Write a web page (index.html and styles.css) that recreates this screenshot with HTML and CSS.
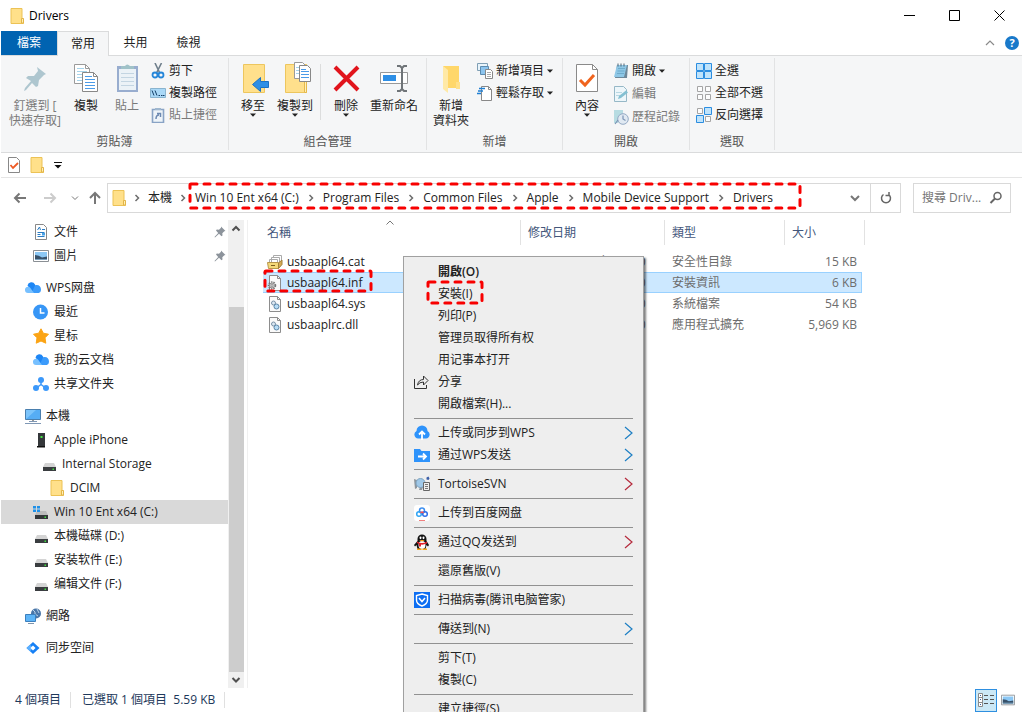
FILE: index.html
```html
<!DOCTYPE html>
<html lang="zh-Hant">

<head>
    <meta charset="UTF-8">
    <meta name="viewport" content="width=device-width, initial-scale=1.0">
    <title>Drivers</title>
    <link rel="stylesheet" href="styles.css">
</head>

<body>
    <!-- shared icons -->
    <svg class="sprite" aria-hidden="true">
        <symbol id="folder" viewBox="0 0 16 16">
            <path d="M2 .5h11v10.500h1.500v4.500H2z" fill="#ffe08a" stroke="#ecc255" />
            <path d="M12.500 15v-4.500h2V15z" fill="#fff0b5" stroke="#e3b548" />
        </symbol>
        <symbol id="chevron" viewBox="0 0 8 8">
            <path d="M2.500 1l3 3-3 3" fill="none" stroke="#6d6d6d" stroke-width="1.500" />
        </symbol>
        <symbol id="drop" viewBox="0 0 6 4">
            <path d="M0 .5h6L3 3.800z" fill="#222" />
        </symbol>
        <symbol id="pin" viewBox="0 0 12 12">
            <path d="M7 .5l4.500 4.500-1.200.3-2 2 .2 2.200-1 .8L5 7.800 1 11.500.5 11l3.700-4L2 4.500l.8-1 2.200.2 2-2z" fill="#8c939b" />
        </symbol>
        <symbol id="drive" viewBox="0 0 16 16">
            <path d="M4 7h9l2 4H2z" fill="#d4d4d4" />
            <path d="M2 11h13v4H2z" fill="#3a3d40" />
            <path d="M11.500 12.500h1.500v1.500h-1.500z" fill="#3fe23f" />
        </symbol>
        <symbol id="cloud" viewBox="0 0 16 16">
            <path d="M2.500 5.500a4 4 0 0 1 7.500-1L14 13H8z" fill="#1d86f5" />
            <path d="M7 12l3-6.500c3-1.500 6 .8 6 4A3.500 3.500 0 0 1 12.500 13H8z" fill="#3b9bfb" />
            <path d="M0 10a3 3 0 0 1 5-2.500L9 13H3a3 3 0 0 1-3-3z" fill="#77c0ff" />
        </symbol>
        <symbol id="page-gear" viewBox="0 0 16 16">
            <path d="M2.500.5h8l3 3v12h-11z" fill="#fafafa" stroke="#8d8d8d" />
            <path d="M10.500.5v3h3" fill="none" stroke="#8d8d8d" />
        </symbol>
        <symbol id="sub" viewBox="0 0 10 14">
            <path d="M1 1l7 6-7 6" fill="none" stroke="currentColor" stroke-width="1.200" />
        </symbol>
        <symbol id="picture" viewBox="0 0 16 16">
            <path d="M.5 2.500h15v11H.5z" fill="#fff" stroke="#8a8f94" />
            <path d="M2 4h12v8H2z" fill="#8cc8f5" />
            <path d="M2 7q4 0 7 2.500l5-1V12H2z" fill="#37516a" />
            <path d="M2 11h12v1H2z" fill="#78a0bd" />
        </symbol>
    </svg>

    <div class="window">
        <header class="titlebar">
            <svg class="ico"><use href="#folder" /></svg>
            <h1>Drivers</h1>
            <div class="win-buttons">
                <button type="button" aria-label="最小化"><svg viewBox="0 0 11 11"><path d="M0 5.500h11" /></svg></button>
                <button type="button" aria-label="最大化"><svg viewBox="0 0 11 11"><path d="M.5.5h10v10H.5z" /></svg></button>
                <button type="button" aria-label="關閉"><svg viewBox="0 0 11 11"><path d="M.5.5l10 10M10.500.5l-10 10" /></svg></button>
            </div>
        </header>

        <nav class="tabs">
            <button type="button" class="tab file">檔案</button>
            <button type="button" class="tab active">常用</button>
            <button type="button" class="tab">共用</button>
            <button type="button" class="tab">檢視</button>
            <div class="tabs-right">
                <button type="button" aria-label="收合功能區"><svg width="10" height="6" viewBox="0 0 10 6"><path d="M1 5l4-4 4 4" fill="none" stroke="#8a8a8a" stroke-width="1.200" /></svg></button>
                <button type="button" class="help" aria-label="說明">?</button>
            </div>
        </nav>

        <!-- ribbon -->
        <section class="ribbon">
            <div class="group g-clip">
                <div class="tools">
                    <button type="button" class="big w62 off">
                        <svg viewBox="0 0 32 32"><path d="M18 5l9 7-2 1-5 5-1 6-2 1-4-4-6 7-2 1 1-3 6-7-5-3 2-2h6l4-5z" fill="#9dbbc6" /></svg>
                        <span>釘選到 [<br>快速存取]</span>
                    </button>
                    <button type="button" class="big w40">
                        <svg viewBox="0 0 32 32">
                            <path d="M4.500 2.500h11l4 4v15h-15z" fill="#fff" stroke="#9a9a9a" />
                            <path d="M15.500 2.500v4h4" fill="none" stroke="#9a9a9a" />
                            <path d="M7 6.500h7M7 9.500h10M7 12.500h10M7 15.500h10M7 18.500h10" stroke="#a5d3ea" />
                            <path d="M12.500 10.500h11l4 4v15h-15z" fill="#fff" stroke="#888" />
                            <path d="M23.500 10.500v4h4" fill="none" stroke="#888" />
                            <path d="M15 14.500h7M15 17.500h10M15 20.500h10M15 23.500h10M15 26.500h10" stroke="#4a9be8" />
                        </svg>
                        <span>複製</span>
                    </button>
                    <button type="button" class="big w42 off">
                        <svg viewBox="0 0 32 32">
                            <path d="M6 4h21v26H6z" fill="#829cc6" />
                            <path d="M8 7h17v21H8z" fill="#e9f2f8" />
                            <path d="M10 11.500h13M10 15.500h13M10 19.500h13M10 23.500h13" stroke="#b7cede" />
                            <path d="M10 7V4h4q2-3 5 0h4v3z" fill="#8bb6bd" />
                        </svg>
                        <span>貼上</span>
                    </button>
                    <div class="small-list">
                        <button type="button" class="small">
                            <svg viewBox="0 0 16 16">
                                <path d="M5 0l4.500 9.500M11.500 0L6.500 10" stroke="#6f7f8c" stroke-width="1.600" fill="none" />
                                <circle cx="5" cy="12" r="2.500" fill="none" stroke="#2586d9" stroke-width="1.800" />
                                <circle cx="11" cy="12" r="2.500" fill="none" stroke="#2586d9" stroke-width="1.800" />
                            </svg>
                            剪下
                        </button>
                        <button type="button" class="small">
                            <svg viewBox="0 0 16 16">
                                <path d="M.5 3.500h15v9H.5z" fill="#a9d8f7" stroke="#8ab4cf" />
                                <path d="M2 5.500l2 5M5 5.500l2 5M8.500 10.500h1.500M11 10.500h1.500M13 10.500h1.500" stroke="#143e66" fill="none" />
                            </svg>
                            複製路徑
                        </button>
                        <button type="button" class="small off">
                            <svg viewBox="0 0 16 16">
                                <path d="M2.500 2.500h11v13h-11z" fill="#edf4fa" stroke="#6f8fb9" stroke-width="1.600" />
                                <path d="M5 3V1h6v2z" fill="#8aa8c5" />
                                <path d="M6 12q0-4 3-4M7 6.500h3.500V10" fill="none" stroke="#4b6ea0" stroke-width="1.500" />
                            </svg>
                            貼上捷徑
                        </button>
                    </div>
                </div>
                <div class="caption">剪貼簿</div>
            </div>

            <div class="group g-org">
                <div class="tools">
                    <button type="button" class="big w42">
                        <svg viewBox="0 0 32 32">
                            <path d="M6.500 2.500h21v28h-21z" fill="#ffe08c" stroke="#edc65e" />
                            <path d="M15.500 22.500l8-7v4h8v6h-8v4z" fill="#2e8fe6" stroke="#1b71c4" />
                        </svg>
                        <span>移至</span>
                        <svg class="drop"><use href="#drop" /></svg>
                    </button>
                    <button type="button" class="big w42">
                        <svg viewBox="0 0 32 32">
                            <path d="M6.500 2.500h21v28h-21z" fill="#ffe08c" stroke="#edc65e" />
                            <path d="M25.500 19.500h2v11h-2z" fill="#fff0b8" stroke="#e5b94d" />
                            <path d="M15.500.5h8l3 3v13h-11z" fill="#fff" stroke="#9a9a9a" />
                            <path d="M17 5.500h5M17 8.500h5M17 11.500h5" stroke="#a5d3ea" />
                            <path d="M20.500 3.500h8l3 3v13h-11z" fill="#fff" stroke="#888" />
                            <path d="M22 7.500h5M22 9.500h8M22 12.500h8M22 15.500h8" stroke="#4a9be8" />
                        </svg>
                        <span>複製到</span>
                        <svg class="drop"><use href="#drop" /></svg>
                    </button>
                    <i class="rule"></i>
                    <button type="button" class="big w42">
                        <svg viewBox="0 0 32 32"><path d="M5 5l23 23M28 5L5 28" stroke="#e1141c" stroke-width="4" /></svg>
                        <span>刪除</span>
                        <svg class="drop"><use href="#drop" /></svg>
                    </button>
                    <button type="button" class="big w54">
                        <svg viewBox="0 0 32 32">
                            <path d="M2.500 10.500h27v11h-27z" fill="#fff" stroke="#999" />
                            <path d="M5 13h13v6H5z" fill="#2e8fe6" />
                            <path d="M19 4h3l2 2 2-2h3M19 29h3l2-2 2 2h3M24 5v22" fill="none" stroke="#6f7478" stroke-width="2" />
                        </svg>
                        <span>重新命名</span>
                    </button>
                </div>
                <div class="caption">組合管理</div>
            </div>

            <div class="group g-new">
                <div class="tools">
                    <button type="button" class="big w48">
                        <svg viewBox="0 0 32 32">
                            <path d="M8 4h16v22H13z" fill="#ffd76a" />
                            <path d="M8 4l5 4v23l-5-4z" fill="#ffe9a6" />
                            <path d="M21 20h4v7h-4z" fill="#ffe08a" />
                        </svg>
                        <span>新增<br>資料夾</span>
                    </button>
                    <div class="small-list">
                        <button type="button" class="small">
                            <svg viewBox="0 0 16 16">
                                <path d="M.5.5h10v7H.5z" fill="#e9f4fb" stroke="#7f9fb5" />
                                <path d="M3.500 3.500h8v8h-8z" fill="#8cc4ee" stroke="#5b8bb0" />
                                <path d="M8.500 6.500h5l2 2v7h-7z" fill="#fff" stroke="#888" />
                                <path d="M10 9.500h4M10 11.500h4M10 13.500h4" stroke="#aaa" />
                            </svg>
                            新增項目
                            <svg class="drop"><use href="#drop" /></svg>
                        </button>
                        <button type="button" class="small">
                            <svg viewBox="0 0 16 16">
                                <path d="M4.500 1.500h7l3 3v11h-10z" fill="#fff" stroke="#888" />
                                <path d="M11.500 1.500v3h3" fill="none" stroke="#888" />
                                <path d="M2 3.500h6M1 6h5M0 8.500h4" stroke="#1f7fd3" stroke-width="1.400" />
                            </svg>
                            輕鬆存取
                            <svg class="drop"><use href="#drop" /></svg>
                        </button>
                    </div>
                </div>
                <div class="caption">新增</div>
            </div>

            <div class="group g-open">
                <div class="tools">
                    <button type="button" class="big w48">
                        <svg viewBox="0 0 32 32">
                            <path d="M5.500 2.500h16l5 5v22h-21z" fill="#fff" stroke="#8a8a8a" />
                            <path d="M21.500 2.500v5h5" fill="none" stroke="#8a8a8a" />
                            <path d="M9 18l5 5 9-10" fill="none" stroke="#f0641e" stroke-width="3" />
                        </svg>
                        <span>內容</span>
                        <svg class="drop"><use href="#drop" /></svg>
                    </button>
                    <div class="small-list loose">
                        <button type="button" class="small">
                            <svg viewBox="0 0 16 16">
                                <path d="M4 2h11l-1 13H2z" fill="#6d8799" />
                                <path d="M4 2h10l-3 12H1z" fill="#8ec7e6" />
                                <path d="M5 5.500h7M4.500 8h7M4 10.500h7" stroke="#6fabcb" />
                                <path d="M5 .5v3M8 .5v3M11 .5v3" stroke="#4e6372" />
                            </svg>
                            開啟
                            <svg class="drop"><use href="#drop" /></svg>
                        </button>
                        <button type="button" class="small off">
                            <svg viewBox="0 0 16 16">
                                <path d="M1.500.5h9l3 3v12h-12z" fill="#ecf7fb" stroke="#7fa9bc" />
                                <path d="M3 6.500h6M3 9.500h4" stroke="#a9d1df" />
                                <path d="M5 13l1-3 7-5.500 2 2L8 12z" fill="#69b3c9" />
                            </svg>
                            編輯
                        </button>
                        <button type="button" class="small off">
                            <svg viewBox="0 0 16 16">
                                <path d="M1 1h9v5L5 14H1z" fill="#a8d6de" />
                                <circle cx="10" cy="10" r="5.300" fill="#dce7f2" stroke="#7d97b8" />
                                <path d="M10 6.500V10l2.500 1.500M2 15l3-4" fill="none" stroke="#5d7ba4" stroke-width="1.200" />
                            </svg>
                            歷程記錄
                        </button>
                    </div>
                </div>
                <div class="caption">開啟</div>
            </div>

            <div class="group g-select">
                <div class="tools">
                    <div class="small-list">
                        <button type="button" class="small">
                            <svg viewBox="0 0 16 16"><path d="M.5.5h7v7h-7zM8.500.5h7v7h-7zM.5 8.500h7v7h-7zM8.500 8.500h7v7h-7z" fill="#bfe3fb" stroke="#2b8de0" /></svg>
                            全選
                        </button>
                        <button type="button" class="small">
                            <svg viewBox="0 0 16 16"><path d="M1.500 1.500h5v5h-5zM9.500 1.500h5v5h-5zM1.500 9.500h5v5h-5zM9.500 9.500h5v5h-5z" fill="#fdfdfd" stroke="#a5a5a5" /></svg>
                            全部不選
                        </button>
                        <button type="button" class="small">
                            <svg viewBox="0 0 16 16">
                                <path d="M1.500 1.500h5v5h-5zM9.500 9.500h5v5h-5z" fill="#fdfdfd" stroke="#a5a5a5" />
                                <path d="M8.500.5h7v7h-7zM.5 8.500h7v7h-7z" fill="#bfe3fb" stroke="#2b8de0" />
                            </svg>
                            反向選擇
                        </button>
                    </div>
                </div>
                <div class="caption">選取</div>
            </div>
        </section>

        <!-- quick access -->
        <div class="quick">
            <button type="button" aria-label="內容">
                <svg class="ico" viewBox="0 0 16 16">
                    <path d="M2.500.5h8l3 3v12h-11z" fill="#fff" stroke="#888" />
                    <path d="M4.500 8l2.500 3 5-5" fill="none" stroke="#ee5a24" stroke-width="1.800" />
                </svg>
            </button>
            <button type="button" aria-label="新增資料夾"><svg class="ico"><use href="#folder" /></svg></button>
            <button type="button" aria-label="自訂"><svg width="8" height="8" viewBox="0 0 8 8"><path d="M0 1.500h8" stroke="#111" /><path d="M.5 4h7L4 7.500z" fill="#111" /></svg></button>
        </div>

        <div class="location">
            <button type="button" class="nav back" aria-label="上一頁"><svg viewBox="0 0 14 14"><path d="M13 7H2M6.500 2.500L2 7l4.500 4.500" /></svg></button>
            <button type="button" class="nav next" aria-label="下一頁"><svg viewBox="0 0 14 14"><path d="M1 7h11M7.500 2.500L12 7l-4.500 4.500" /></svg></button>
            <button type="button" class="nav recent" aria-label="最近"><svg viewBox="0 0 14 14"><path d="M4 5.500l3 3 3-3" /></svg></button>
            <button type="button" class="nav up" aria-label="上移"><svg viewBox="0 0 14 14"><path d="M7 13V2M2 7l5-5 5 5" /></svg></button>
            <div class="address">
                <svg class="ico"><use href="#folder" /></svg>
                <svg class="chev"><use href="#chevron" /></svg>
                <a href="#">本機</a>
                <svg class="chev"><use href="#chevron" /></svg>
                <div class="path">
                    <a href="#">Win 10 Ent x64 (C:)</a>
                    <svg class="chev"><use href="#chevron" /></svg>
                    <a href="#">Program Files</a>
                    <svg class="chev"><use href="#chevron" /></svg>
                    <a href="#">Common Files</a>
                    <svg class="chev"><use href="#chevron" /></svg>
                    <a href="#">Apple</a>
                    <svg class="chev"><use href="#chevron" /></svg>
                    <a href="#">Mobile Device Support</a>
                    <svg class="chev"><use href="#chevron" /></svg>
                    <a href="#">Drivers</a>
                    <svg class="mark"><rect x="2" y="2" rx="1" /></svg>
                </div>
                <button type="button" class="history" aria-label="先前的位置"><svg width="12" height="12" viewBox="0 0 12 12"><path d="M2 4l4 4 4-4" fill="none" stroke="#777" stroke-width="2" /></svg></button>
                <button type="button" class="refresh" aria-label="重新整理"><svg width="14" height="14" viewBox="0 0 14 14"><path d="M9.500 3.500a4.500 4.500 0 1 1-5 0M4 1v3.500h3.500" transform="matrix(-1 0 0 1 14 0)" fill="none" stroke="#666" stroke-width="1.500" /></svg></button>
            </div>
            <label class="search">
                <input type="text" placeholder="搜尋 Driv..." aria-label="搜尋 Drivers">
                <svg width="14" height="14" viewBox="0 0 14 14"><circle cx="8.500" cy="5" r="3.500" fill="none" stroke="#666" stroke-width="1.500" /><path d="M6 7.500L1.500 12" stroke="#666" stroke-width="2" /></svg>
            </label>
        </div>

        <main class="content">
            <nav class="tree">
                <a href="#" class="l2">
                    <svg class="ico" viewBox="0 0 16 16"><path d="M2.500.5h8l3 3v12h-11z" fill="#fff" stroke="#888" /><path d="M4.500 6l2-3 1 3M9 5.500h3M4.500 8.500h7M4.500 10.500h3M4.500 12.500h7" fill="none" stroke="#2a7cc4" /><path d="M9 9h3v2.500H9z" fill="#4aa3e6" /></svg>
                    文件<svg class="pin"><use href="#pin" /></svg>
                </a>
                <a href="#" class="l2"><svg class="ico"><use href="#picture" /></svg>圖片<svg class="pin"><use href="#pin" /></svg></a>

                <a href="#" class="l1"><svg class="ico"><use href="#cloud" /></svg>WPS网盘</a>
                <a href="#" class="l2">
                    <svg class="ico" viewBox="0 0 16 16"><circle cx="7.500" cy="8" r="7.500" fill="#3796f6" /><path d="M7.500 4v5h4" fill="none" stroke="#fff" stroke-width="1.500" /></svg>
                    最近
                </a>
                <a href="#" class="l2">
                    <svg class="ico" viewBox="0 0 16 16"><path d="M8 .8l2.300 4.400 5.200 1-3.500 3.600.8 5.400L8 13l-4.800 2.200.8-5.400L.5 6.200l5.200-1z" fill="#fba415" stroke="#fba415" stroke-linejoin="round" /></svg>
                    星标
                </a>
                <a href="#" class="l2"><svg class="ico"><use href="#cloud" /></svg>我的云文档</a>
                <a href="#" class="l2">
                    <svg class="ico" viewBox="0 0 16 16"><path d="M8 4v5M8 8.500l-4 3M8 8.500l4 3" stroke="#3b98fa" stroke-width="1.500" /><circle cx="8" cy="4" r="3" fill="#3b98fa" /><circle cx="3" cy="12" r="3" fill="#3b98fa" /><circle cx="13" cy="12" r="3" fill="#3b98fa" /></svg>
                    共享文件夹
                </a>

                <a href="#" class="l1">
                    <svg class="ico" viewBox="0 0 16 16"><path d="M.5 1.500h15v10H.5z" fill="#56adf5" stroke="#4a7fae" /><path d="M1 11V2h10z" fill="#7cc4fb" /><path d="M7 12h2v1.500H7z" fill="#999" /><path d="M4 13.500h8M0 15.500h16" stroke="#8098b5" /></svg>
                    本機
                </a>
                <a href="#" class="l2">
                    <svg class="ico" viewBox="0 0 16 16"><path d="M5 1h7v13H5z" fill="#34373a" /><path d="M4 14h8v1.500H4z" fill="#111" /><path d="M7.500 4h2v2h-2z" fill="#45e645" /></svg>
                    Apple iPhone
                </a>
                <a href="#" class="l3"><svg class="ico"><use href="#drive" /></svg>Internal Storage</a>
                <a href="#" class="l4"><svg class="ico"><use href="#folder" /></svg>DCIM</a>
                <a href="#" class="l2 current">
                    <svg class="ico" viewBox="0 0 16 16"><path d="M4 7h9l2 4H2z" fill="#bcbcbc" /><path d="M2 11h13v4H2z" fill="#34373a" /><path d="M11.500 12.500h1.500v1.500h-1.500z" fill="#3fe23f" /><path d="M0 2h3v2.500H0zM4 2h3v2.500H4zM0 5.500h3V8H0zM4 5.500h3V8H4z" fill="#1e90e8" /></svg>
                    Win 10 Ent x64 (C:)
                </a>
                <a href="#" class="l2"><svg class="ico"><use href="#drive" /></svg>本機磁碟 (D:)</a>
                <a href="#" class="l2"><svg class="ico"><use href="#drive" /></svg>安装软件 (E:)</a>
                <a href="#" class="l2"><svg class="ico"><use href="#drive" /></svg>编辑文件 (F:)</a>

                <a href="#" class="l1">
                    <svg class="ico" viewBox="0 0 16 16"><circle cx="11" cy="5.500" r="5" fill="#4a76a8" /><path d="M8 2q3 2 2 4l3 2M12 1l2 4" stroke="#b9d3ea" fill="none" /><path d="M.5 6.500h10v7H.5z" fill="#5db4f7" stroke="#3c7fbd" /><path d="M3 15.500h6" stroke="#7d94ad" /></svg>
                    網路
                </a>
                <a href="#" class="l1">
                    <svg class="ico" viewBox="0 0 16 16"><path d="M8 2l6.500 6L8 14 1.500 8z" fill="#1680f5" /><path d="M1.500 8L5 4.800 8 8l-3 3.200z" fill="#5db0ff" /><path d="M8 5.500L10.500 8 8 10.500 5.500 8z" fill="#fff" /></svg>
                    同步空间
                </a>
            </nav>

            <div class="scrollbar">
                <svg width="10" height="8" viewBox="0 0 10 8"><path d="M1.500 5.500L5 2l3.500 3.500" fill="none" stroke="#505050" stroke-width="2" /></svg>
                <div class="track"><div class="thumb"></div></div>
                <svg width="10" height="8" viewBox="0 0 10 8"><path d="M1.500 2L5 5.500 8.500 2" fill="none" stroke="#505050" stroke-width="2" /></svg>
            </div>

            <section class="files">
                <table>
                    <thead>
                        <tr>
                            <th class="c-name">名稱<svg class="sort" viewBox="0 0 8 5"><path d="M.5 4.500L4 1l3.500 3.500" fill="none" stroke="#777" /></svg></th>
                            <th class="c-date">修改日期</th>
                            <th class="c-type">類型</th>
                            <th class="c-size">大小</th>
                        </tr>
                    </thead>
                    <tbody>
                        <tr>
                            <td class="name"><div>
                                <svg class="ico" viewBox="0 0 16 16"><path d="M6.500 1.500h8v7h-8z" fill="#fff" stroke="#aaa" /><path d="M4.500 3.500h8v7h-8zM2.500 5.500h8v7h-8z" fill="#fff" stroke="#aaa" /><path d="M.5 8.500h11v6H1.500z" fill="#f4d878" stroke="#b8964a" /><path d="M11.500 14.500l3.500-4V6l-3.500 3z" fill="#d6ab53" stroke="#a07f38" /><path d="M4 11.500h4" stroke="#7c5d1f" /></svg>
                                usbaapl64.cat</div></td>
                            <td>2015/10/6 下午 03:40</td>
                            <td>安全性目錄</td>
                            <td class="size">15 KB</td>
                        </tr>
                        <tr class="selected">
                            <td class="name"><div>
                                <svg class="ico" viewBox="0 0 16 16"><use href="#page-gear" /><circle cx="5" cy="10.500" r="3.500" fill="none" stroke="#777" stroke-width="1.500" stroke-dasharray="1.500 1" /><circle cx="5" cy="10.500" r="2.500" fill="#ddd" stroke="#888" /><circle cx="5" cy="10.500" r="1" fill="#fff" stroke="#888" /></svg>
                                usbaapl64.inf</div><svg class="mark"><rect x="2" y="2" rx="1" /></svg></td>
                            <td>2015/10/6 下午 03:40</td>
                            <td>安裝資訊</td>
                            <td class="size">6 KB</td>
                        </tr>
                        <tr>
                            <td class="name"><div>
                                <svg class="ico" viewBox="0 0 16 16"><use href="#page-gear" /><circle cx="6.500" cy="7" r="2" fill="#dbe8f3" stroke="#7a91a6" /><circle cx="9.500" cy="10.500" r="2.500" fill="#b8dcf5" stroke="#5c86a8" /></svg>
                                usbaapl64.sys</div></td>
                            <td>2015/10/6 下午 03:40</td>
                            <td>系統檔案</td>
                            <td class="size">54 KB</td>
                        </tr>
                        <tr>
                            <td class="name"><div>
                                <svg class="ico" viewBox="0 0 16 16"><use href="#page-gear" /><circle cx="6.500" cy="7" r="2" fill="#dbe8f3" stroke="#7a91a6" /><circle cx="9.500" cy="10.500" r="2.500" fill="#b8dcf5" stroke="#5c86a8" /></svg>
                                usbaaplrc.dll</div></td>
                            <td>2015/10/6 下午 03:40</td>
                            <td>應用程式擴充</td>
                            <td class="size">5,969 KB</td>
                        </tr>
                    </tbody>
                </table>
            </section>
        </main>

        <footer class="status">
            <span>4 個項目</span>
            <span>已選取 1 個項目&nbsp; 5.59 KB</span>
            <div class="views">
                <button type="button" class="on" aria-label="詳細資料">
                    <svg width="18" height="16" viewBox="0 0 18 16"><path d="M1.500 1.500h4v13h-4zM1.500 5.500h4M1.500 10.500h4" fill="#fff" stroke="#8a8a8a" /><path d="M3 3h1v1H3zM3 7h1v1H3zM3 12h1v1H3z" fill="#365f9c" /><path d="M7 3.500h4M13 3.500h4M7 7.500h4M13 7.500h4M7 11.500h4M13 11.500h4" stroke="#555" /></svg>
                </button>
                <button type="button" aria-label="大圖示"><svg width="14" height="14"><use href="#picture" /></svg></button>
            </div>
        </footer>

        <!-- context menu -->
        <div class="menu" role="menu">
            <button type="button" class="default">開啟(O)</button>
            <button type="button">安裝(I)<svg class="mark"><rect x="2" y="2" rx="1" /></svg></button>
            <button type="button">列印(P)</button>
            <button type="button">管理员取得所有权</button>
            <button type="button">用记事本打开</button>
            <button type="button">
                <svg class="ico" viewBox="0 0 16 16"><path d="M.5 5v9.500h12V11" fill="none" stroke="#333" /><path d="M3.500 11q1-5.500 6-5.500V2l4.500 4.500L9.500 11V8q-4 0-6 3z" fill="none" stroke="#333" stroke-linejoin="round" /></svg>
                分享
            </button>
            <button type="button">開啟檔案(H)...</button>
            <hr>
            <button type="button">
                <svg class="ico" viewBox="0 0 16 16"><path d="M4 13.500a4 4 0 0 1-1.500-7.500 5.500 5.500 0 0 1 11 0A4 4 0 0 1 12 13.500z" fill="#2e93fb" /><path d="M8 15V7M5 9.500L8 6.500l3 3" fill="none" stroke="#fff" stroke-width="1.800" /></svg>
                上传或同步到WPS<svg class="sub"><use href="#sub" /></svg>
            </button>
            <button type="button">
                <svg class="ico" viewBox="0 0 16 16"><path d="M0 2h6l1.500 2H16v11H0z" fill="#2e93fb" /><path d="M4 9.500h8M9 6.500l3 3-3 3" fill="none" stroke="#fff" stroke-width="1.800" /></svg>
                通过WPS发送<svg class="sub"><use href="#sub" /></svg>
            </button>
            <hr>
            <button type="button">
                <svg class="ico" viewBox="0 0 16 16"><path d="M0 3l3 1v8l-2 1zM9 11l-1 3H5l1-3z" fill="#8d959c" /><circle cx="6.500" cy="7" r="4.500" fill="#9fc8e8" stroke="#7ea3c0" /><path d="M12.500 1.500l2-1 1 2-1 1.500-2-.5z" fill="#3c5fa8" /><path d="M9.500 6.500h6v8h-6z" fill="#eee" stroke="#666" /><path d="M11 8.500h3M11 10.500h3M11 12.500h3" stroke="#777" /></svg>
                TortoiseSVN<svg class="sub red"><use href="#sub" /></svg>
            </button>
            <hr>
            <button type="button">
                <svg class="ico" viewBox="0 0 16 16"><rect width="16" height="16" rx="3" fill="#fff" /><circle cx="8" cy="5.500" r="2.500" fill="none" stroke="#3a8df0" stroke-width="1.500" /><circle cx="5" cy="9" r="2.300" fill="none" stroke="#31a5f5" stroke-width="1.500" /><circle cx="11" cy="9" r="2.300" fill="none" stroke="#2f6fe8" stroke-width="1.500" /><path d="M6.500 8q1.500-2 3 0" fill="none" stroke="#f0525c" stroke-width="1.500" /><path d="M5 15.500h6" stroke="#f0807f" /></svg>
                上传到百度网盘
            </button>
            <hr>
            <button type="button">
                <svg class="ico" viewBox="0 0 16 16"><path d="M3.500 5a4.500 4.500 0 0 1 9 0v2l2.500 4-1 1.500-1.500-1.500-1 4h-8l-1-4L1 12.500 0 11l3.500-4z" fill="#111" /><ellipse cx="8" cy="11" rx="3.500" ry="4" fill="#fff" /><ellipse cx="6.500" cy="3.800" rx="1" ry="1.400" fill="#fff" /><ellipse cx="9.500" cy="3.800" rx="1" ry="1.400" fill="#fff" /><path d="M5 6h6l-3 1.500z" fill="#f7a51b" /><path d="M3 7.500q5 3 10 0v2q-4 1.500-6 1v2H5v-2.500L3 9z" fill="#e3202a" /><path d="M3 14.500h4.500V16H3zM8.500 14.500H13V16H8.500z" fill="#f7a51b" /></svg>
                通过QQ发送到<svg class="sub red"><use href="#sub" /></svg>
            </button>
            <hr>
            <button type="button">還原舊版(V)</button>
            <hr>
            <button type="button">
                <svg class="ico" viewBox="0 0 16 16"><path d="M0 0h16v16H0z" fill="#0d6ef2" /><path d="M8 2l5.500 1.500V8q0 4-5.500 6Q2.500 12 2.500 8V3.500z" fill="none" stroke="#fff" stroke-width="1.400" /><path d="M5 6l3 3.500L11 6" fill="none" stroke="#fff" stroke-width="1.500" /></svg>
                扫描病毒(腾讯电脑管家)
            </button>
            <hr>
            <button type="button">傳送到(N)<svg class="sub"><use href="#sub" /></svg></button>
            <hr>
            <button type="button">剪下(T)</button>
            <button type="button">複製(C)</button>
            <hr>
            <button type="button">建立捷徑(S)</button>
        </div>
    </div>
</body>

</html>
```
FILE: styles.css
```css
* {
    box-sizing: border-box;
}

body {
    margin: 0;
    font-family: "Open Sans", "Noto Sans CJK TC", sans-serif;
    font-size: 12px;
    line-height: 16px;
    color: #222;
    background: #fff;
}

button {
    display: flex;
    align-items: center;
    justify-content: center;
    margin: 0;
    padding: 0;
    border: none;
    background: none;
    font: inherit;
    color: inherit;
    white-space: nowrap;
}

a {
    color: inherit;
    text-decoration: none;
    white-space: nowrap;
}

svg {
    flex-shrink: 0;
}

.sprite {
    position: absolute;
    width: 0;
    height: 0;
}

.ico {
    width: 16px;
    height: 16px;
}

.window {
    position: relative;
    display: flex;
    flex-direction: column;
    height: 100vh;
    padding-left: 1px;
    overflow: hidden;
}

/* title bar */
.titlebar {
    display: flex;
    align-items: center;
    height: 31px;
    padding-left: 8px;
    gap: 4px;
}

.titlebar h1 {
    margin: 0;
    font-size: 12px;
    font-weight: normal;
    color: #000;
}

.win-buttons {
    display: flex;
    margin-left: auto;
}

.win-buttons button {
    width: 45px;
    height: 30px;
}

.win-buttons svg {
    width: 11px;
    height: 11px;
    fill: none;
    stroke: #000;
}

/* tabs */
.tabs {
    display: flex;
    height: 24px;
}

.tab {
    width: 53px;
    height: 24px;
}

.tab.file {
    width: 56px;
    background: #0063b1;
    color: #fff;
}

.tab.active {
    width: 52px;
    height: 25px;
    background: #f5f6f7;
    border: 1px solid #dadbdc;
    border-bottom: none;
    z-index: 1;
}

.tabs-right {
    display: flex;
    align-items: center;
    gap: 10px;
    margin-left: auto;
    padding-right: 3px;
}

.help {
    width: 14px;
    height: 14px;
    border-radius: 7px;
    background: #1979ca;
    color: #fff;
    font-weight: bold;
    font-size: 11px;
}

/* ribbon */
.ribbon {
    display: flex;
    height: 98px;
    background: #f5f6f7;
    border-top: 1px solid #dadbdc;
    border-bottom: 1px solid #dadbdc;
}

.group {
    display: flex;
    flex-direction: column;
    margin: 2px 0;
    padding-top: 2px;
    border-right: 1px solid #e2e3e4;
}

.g-clip {
    width: 228px;
}

.g-org {
    width: 198px;
}

.g-clip .tools,
.g-org .tools {
    padding-left: 3px;
}

.g-new {
    width: 136px;
}

.g-open {
    width: 127px;
}

.g-select {
    width: 85px;
}

.g-select .tools {
    padding-left: 4px;
}

.tools {
    display: flex;
    align-items: flex-start;
    height: 74px;
}

.caption {
    text-align: center;
    color: #555;
}

.big {
    flex-direction: column;
    justify-content: flex-start;
    padding-top: 2px;
    line-height: 15px;
}

.big > svg {
    width: 32px;
    height: 32px;
}

.big > span {
    margin-top: 4px;
}

.big > .drop,
.drop {
    width: 6px;
    height: 4px;
}

.w40 {
    width: 40px;
}

.w42 {
    width: 42px;
}

.w48 {
    width: 48px;
}

.w54 {
    width: 54px;
}

.w62 {
    width: 62px;
}

.off {
    color: #7a7a7a;
}

.off svg {
    opacity: 0.8;
}

.rule {
    width: 1px;
    height: 56px;
    margin: 4px 4px 0;
    background: #dcdddd;
}

.small-list {
    display: flex;
    flex-direction: column;
    padding-left: 2px;
}

.small-list.loose {
    gap: 1px;
}

.small {
    justify-content: flex-start;
    gap: 3px;
    height: 22px;
}

.small svg {
    width: 16px;
    height: 16px;
}

.small .drop {
    width: 6px;
    height: 4px;
}

.quick {
    display: flex;
    align-items: center;
    gap: 7px;
    height: 25px;
    padding-left: 5px;
    border-bottom: 1px solid #e5e5e5;
}

.quick button:last-child {
    padding-left: 2px;
}

/* address row */
.location {
    display: flex;
    align-items: center;
    height: 40px;
}

.nav {
    width: 30px;
}

.nav svg {
    width: 14px;
    height: 14px;
    fill: none;
    stroke: #777;
    stroke-width: 2;
}

.back {
    margin-left: 4px;
}

.next svg {
    stroke: #ccc;
}

.recent,
.up {
    width: 20px;
}

.recent svg {
    stroke-width: 1;
}

.address {
    display: flex;
    align-items: center;
    flex: 1;
    height: 30px;
    margin-left: 2px;
    padding-left: 3px;
    border: 1px solid #d9d9d9;
}

.chev {
    width: 8px;
    height: 8px;
    margin: 0 8px;
}

.address > .chev {
    margin: 0 7px 0 6px;
}

.address > .chev:last-of-type {
    margin: 0 1px 0 7px;
}

.path {
    position: relative;
    display: flex;
    align-items: center;
    align-self: flex-start;
    width: 614px;
    height: 28px;
    padding-left: 7px;
}

.mark {
    position: absolute;
    top: 0;
    left: 0;
    width: 100%;
    height: 100%;
}

.path .mark {
    top: -2px;
}

.mark rect {
    width: calc(100% - 4px);
    height: calc(100% - 4px);
    fill: none;
    stroke: #f80000;
    stroke-width: 3;
    stroke-linecap: round;
    stroke-dasharray: 6 7;
}

.history {
    width: 30px;
    margin-left: auto;
}

.refresh {
    width: 30px;
    height: 28px;
    border-left: 1px solid #d9d9d9;
}

.search {
    display: flex;
    align-items: center;
    width: 98px;
    height: 30px;
    margin: 0 11px 0 12px;
    padding: 0 7px 0 8px;
    border: 1px solid #d9d9d9;
}

.search input {
    flex: 1;
    min-width: 0;
    padding: 0;
    border: none;
    outline: none;
    font: inherit;
}

.search input::placeholder {
    color: #757575;
}

.content {
    display: flex;
    flex: 1;
    min-height: 0;
    padding-top: 2px;
}

/* folder tree */
.tree {
    width: 227px;
    overflow: hidden;
}

.tree a {
    display: flex;
    align-items: center;
    gap: 5px;
    height: 24px;
    padding-left: 32px;
}

.tree .l1 {
    margin-top: 8px;
    padding-left: 24px;
}

.tree .l3 {
    padding-left: 40px;
}

.tree .l4 {
    padding-left: 48px;
}

.tree .current {
    background: #d9d9d9;
}

.tree .pin {
    width: 12px;
    height: 12px;
    margin-left: auto;
    margin-right: 2px;
}

.scrollbar {
    display: flex;
    flex-direction: column;
    align-items: center;
    width: 16px;
    padding: 5px 0 4px;
    background: #f0f0f0;
}

.track {
    display: flex;
    flex: 1;
    width: 15px;
    margin: 5px 0 4px;
    padding-top: 69px;
}

.thumb {
    flex: 1;
    background: #cdcdcd;
}

/* file list */
.files {
    flex: 1;
    margin-left: 3px;
    padding-left: 15px;
    border-left: 1px solid #f0f0f0;
}

table {
    table-layout: fixed;
    width: 602px;
    border-collapse: separate;
    border-spacing: 0;
}

th {
    position: relative;
    height: 25px;
    padding: 0 0 0 7px;
    border-right: 1px solid #e2e2e2;
    font-weight: normal;
    text-align: left;
    color: #43567b;
}

th.c-name {
    padding-left: 4px;
}

.c-name {
    width: 258px;
}

.c-date {
    width: 144px;
}

.c-type {
    width: 120px;
}

.c-size {
    width: 80px;
}

.sort {
    position: absolute;
    top: 0;
    left: 123px;
    width: 8px;
    height: 5px;
}

tbody::before {
    content: "";
    display: block;
    height: 6px;
}

td {
    height: 21px;
    padding: 0 0 0 7px;
    color: #6d6d6d;
    white-space: nowrap;
}

td.name {
    position: relative;
    padding-left: 4px;
    color: #222;
}

td.name div {
    display: flex;
    align-items: center;
    gap: 4px;
}

td.name .mark {
    top: -3px;
    width: 110px;
    height: 24px;
}

td.size {
    padding-right: 5px;
    border-right: 3px solid transparent;
    text-align: right;
}

.selected td {
    background: #cce8ff;
    background-clip: padding-box;
    box-shadow: inset 0 1px #99d1ff, inset 0 -1px #99d1ff;
}

.selected td.size {
    box-shadow: inset 0 1px #99d1ff, inset -1px -1px #99d1ff;
}

/* status bar */
.status {
    display: flex;
    align-items: center;
    height: 24px;
    padding-left: 14px;
    color: #1e395b;
}

.status span {
    padding-right: 9px;
    margin-right: 11px;
    border-right: 1px solid #e0e0e0;
}

.views {
    display: flex;
    gap: 4px;
    margin-left: auto;
    padding-right: 7px;
}

.views button {
    height: 23px;
}

.views .on {
    width: 22px;
    background: #cbe8f6;
    border: 1px solid #2e8fe0;
}

/* context menu */
.menu {
    position: absolute;
    top: 256px;
    left: 403px;
    width: 241px;
    padding: 4px 10px;
    background: #eee;
    border: 1px solid #a0a0a0;
    box-shadow: 2px 2px 2px rgba(0, 0, 0, 0.5);
}

.menu button {
    position: relative;
    justify-content: flex-start;
    width: 100%;
    height: 22px;
    padding-left: 24px;
}

.menu .ico {
    margin-left: -24px;
    margin-right: 8px;
}

.menu .default {
    font-weight: 600;
}

.menu hr {
    height: 1px;
    margin: 3px 0;
    border: none;
    background: #919191;
}

.menu .mark {
    left: 12px;
    width: 58px;
    height: 25px;
    top: -3px;
}

.menu .sub {
    width: 10px;
    height: 14px;
    margin-left: auto;
    margin-right: -1px;
    color: #1d7fc4;
}

.menu .sub.red {
    color: #b52a3c;
}
```
